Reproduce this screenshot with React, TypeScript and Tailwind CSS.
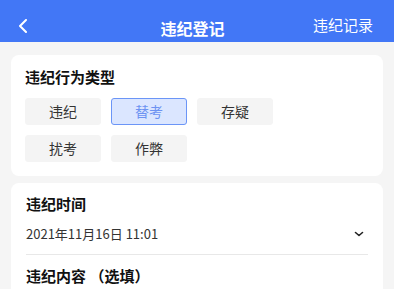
import React from "react";

const font = { fontFamily: '"Noto Sans CJK SC", "Noto Sans", sans-serif' };

function Btn({ label, active }: { label: string; active?: boolean }) {
  return (
    <div
      className={
        active
          ? "w-[76px] h-[27px] rounded-[3px] border border-[#6b95f7] bg-[#dbe6ff] text-[#6d93f2] text-[14px] flex items-center justify-center"
          : "w-[76px] h-[27px] rounded-[3px] border border-[#f4f4f4] bg-[#f4f4f4] text-[#333333] text-[14px] flex items-center justify-center"
      }
    >
      {label}
    </div>
  );
}

export default function App() {
  return (
    <div className="w-[394px] h-[289px] bg-[#f5f5f5] overflow-hidden" style={font}>
      <div className="h-[42px] bg-[#4277f6] flex items-center justify-between pt-[8px] pl-[18px] pr-[21px] text-white">
        <svg width="10" height="14" viewBox="0 0 10 14" className="translate-y-[1px]">
          <path d="M8 1 L2 7 L8 13" fill="none" stroke="white" strokeWidth="2" strokeLinecap="round" strokeLinejoin="round" />
        </svg>
        <div className="text-[16px] font-semibold translate-y-[3px] ml-[44px]">违纪登记</div>
        <div className="text-[15px]">违纪记录</div>
      </div>

      <div className="mx-[11px] mt-[13px] bg-white rounded-[8px] px-[14px] pt-[12px] pb-[14px]">
        <div className="text-[15px] font-bold text-[#111111] leading-[20px]">违纪行为类型</div>
        <div className="mt-[11px] flex flex-col gap-[10px]">
          <div className="flex gap-[10px]">
            <Btn label="违纪" />
            <Btn label="替考" active />
            <Btn label="存疑" />
          </div>
          <div className="flex gap-[10px]">
            <Btn label="扰考" />
            <Btn label="作弊" />
          </div>
        </div>
      </div>

      <div className="mx-[11px] mt-[7px] bg-white rounded-[8px] px-[15px] pt-[11px]">
        <div className="text-[15px] font-bold text-[#111111] leading-[20px]">违纪时间</div>
        <div className="mt-[10px] flex items-center justify-between h-[20px]">
          <span className="text-[13px] text-[#333333]">2021年11月16日 11:01</span>
          <svg width="10" height="6" viewBox="0 0 10 6" className="mr-[4px]">
            <path d="M1.5 1.5 L5 4.5 L8.5 1.5" fill="none" stroke="#222" strokeWidth="1.6" strokeLinecap="round" strokeLinejoin="round" />
          </svg>
        </div>
        <div className="mt-[10px] h-px bg-[#e8e8e8]" />
        <div className="mt-[11px] text-[15px] font-bold text-[#111111] leading-[20px]">违纪内容 （选填）</div>
        <div className="h-[20px]" />
      </div>
    </div>
  );
}
